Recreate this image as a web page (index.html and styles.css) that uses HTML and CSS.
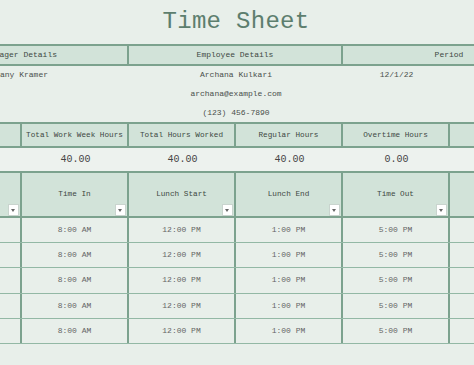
FILE: index.html
```html
<!DOCTYPE html>
<html>
<head>
<meta charset="utf-8">
<link rel="stylesheet" href="styles.css">
</head>
<body>
<div class="viewport">
  <div class="sheet">
    <h1 class="title">Time Sheet</h1>

    <div class="details-head">
      <div class="dh-cell">Manager Details</div>
      <div class="dh-cell">Employee Details</div>
      <div class="dh-cell">Period</div>
    </div>

    <div class="details-body">
      <div class="db-col db-left"><span class="db-line">Stephany Kramer</span></div>
      <div class="db-col db-center">
        <span class="db-line">Archana Kulkari</span>
        <span class="db-line">archana@example.com</span>
        <span class="db-line">(123) 456-7890</span>
      </div>
      <div class="db-col db-center"><span class="db-line">12/1/22</span></div>
      <div class="db-col"></div>
    </div>

    <div class="sum-head">
      <div class="sh-cell"></div>
      <div class="sh-cell">Total Work Week Hours</div>
      <div class="sh-cell">Total Hours Worked</div>
      <div class="sh-cell">Regular Hours</div>
      <div class="sh-cell">Overtime Hours</div>
      <div class="sh-cell last"></div>
    </div>
    <div class="sum-values">
      <div class="sv-cell"></div>
      <div class="sv-cell">40.00</div>
      <div class="sv-cell">40.00</div>
      <div class="sv-cell">40.00</div>
      <div class="sv-cell">0.00</div>
      <div class="sv-cell"></div>
    </div>

    <div class="tbl-head">
      <div class="th-cell"><span class="dd"></span></div>
      <div class="th-cell">Time In<span class="dd"></span></div>
      <div class="th-cell">Lunch Start<span class="dd"></span></div>
      <div class="th-cell">Lunch End<span class="dd"></span></div>
      <div class="th-cell">Time Out<span class="dd"></span></div>
      <div class="th-cell last"></div>
    </div>

    <div class="tbl-body">
      <div class="tr"><div class="td"></div><div class="td">8:00 AM</div><div class="td">12:00 PM</div><div class="td">1:00 PM</div><div class="td">5:00 PM</div><div class="td last"></div></div>
      <div class="tr"><div class="td"></div><div class="td">8:00 AM</div><div class="td">12:00 PM</div><div class="td">1:00 PM</div><div class="td">5:00 PM</div><div class="td last"></div></div>
      <div class="tr"><div class="td"></div><div class="td">8:00 AM</div><div class="td">12:00 PM</div><div class="td">1:00 PM</div><div class="td">5:00 PM</div><div class="td last"></div></div>
      <div class="tr"><div class="td"></div><div class="td">8:00 AM</div><div class="td">12:00 PM</div><div class="td">1:00 PM</div><div class="td">5:00 PM</div><div class="td last"></div></div>
      <div class="tr"><div class="td"></div><div class="td">8:00 AM</div><div class="td">12:00 PM</div><div class="td">1:00 PM</div><div class="td">5:00 PM</div><div class="td last"></div></div>
    </div>
  </div>
</div>
</body>
</html>
```

FILE: styles.css
```css
html, body {
  margin: 0;
  padding: 0;
  background: #e8efea;
}
body {
  width: 474px;
  height: 365px;
  overflow: hidden;
  font-family: "Liberation Mono", "Courier New", monospace;
  color: #555;
}
.viewport {
  width: 474px;
  height: 365px;
  overflow: hidden;
}
.sheet {
  width: 642px;
  margin-left: -85px;
}
.title {
  margin: 0;
  height: 44px;
  line-height: 44px;
  font-size: 24px;
  font-weight: normal;
  text-align: center;
  color: #5d7e6e;
  letter-spacing: 0.3px;
}

/* details */
.details-head {
  display: grid;
  grid-template-columns: 214px 214px 214px;
  background: #d2e3d9;
  border-top: 2px solid #7ca28e;
  border-bottom: 2px solid #7ca28e;
}
.dh-cell {
  height: 18px;
  line-height: 18px;
  font-size: 8px;
  text-align: center;
  color: #3e4843;
  border-right: 2px solid #7ca28e;
}
.details-body {
  display: grid;
  grid-template-columns: 214px 214px 107px 107px;
  height: 56px;
  padding-top: 0;
}
.db-col {
  display: flex;
  flex-direction: column;
}
.db-left {
  padding-left: 61px;
}
.db-center {
  align-items: center;
}
.db-line {
  height: 19px;
  line-height: 18px;
  font-size: 8px;
  color: #4a4f4c;
}

/* summary */
.sum-head {
  display: grid;
  grid-template-columns: repeat(6, 107px);
  background: #d2e3d9;
  border-top: 2px solid #7ca28e;
  border-bottom: 2px solid #7ca28e;
}
.sh-cell {
  height: 22px;
  line-height: 22px;
  font-size: 7.7px;
  text-align: center;
  color: #3e4843;
  border-right: 2px solid #7ca28e;
}
.sh-cell.last { border-right: none; }
.sum-values {
  display: grid;
  grid-template-columns: repeat(6, 107px);
  background: #edf2ee;
}
.sv-cell {
  height: 23px;
  line-height: 24px;
  font-size: 10px;
  text-align: center;
  color: #444;
}

/* table */
.tbl-head {
  display: grid;
  grid-template-columns: repeat(6, 107px);
  background: #d2e3d9;
  border-top: 2px solid #7ca28e;
  border-bottom: 2px solid #7ca28e;
}
.th-cell {
  position: relative;
  height: 43px;
  line-height: 43px;
  font-size: 7.7px;
  text-align: center;
  color: #3e4843;
  border-right: 2px solid #7ca28e;
}
.th-cell.last { border-right: none; }
.dd {
  position: absolute;
  right: 1px;
  bottom: 0;
  width: 9px;
  height: 10px;
  background: #fff;
  border: 1px solid #c9d4ce;
  box-sizing: content-box;
}
.dd::after {
  content: "";
  position: absolute;
  left: 2px;
  top: 4px;
  border-left: 2.5px solid transparent;
  border-right: 2.5px solid transparent;
  border-top: 3px solid #666;
}
.tbl-body {
  display: flex;
  flex-direction: column;
}
.tr {
  display: grid;
  grid-template-columns: repeat(6, 107px);
  border-bottom: 1px solid #93b8a5;
}
.td {
  height: 24.2px;
  line-height: 24.2px;
  font-size: 8px;
  text-align: center;
  color: #666;
  border-right: 2px solid #7ca28e;
}
.td.last { border-right: none; }
```
